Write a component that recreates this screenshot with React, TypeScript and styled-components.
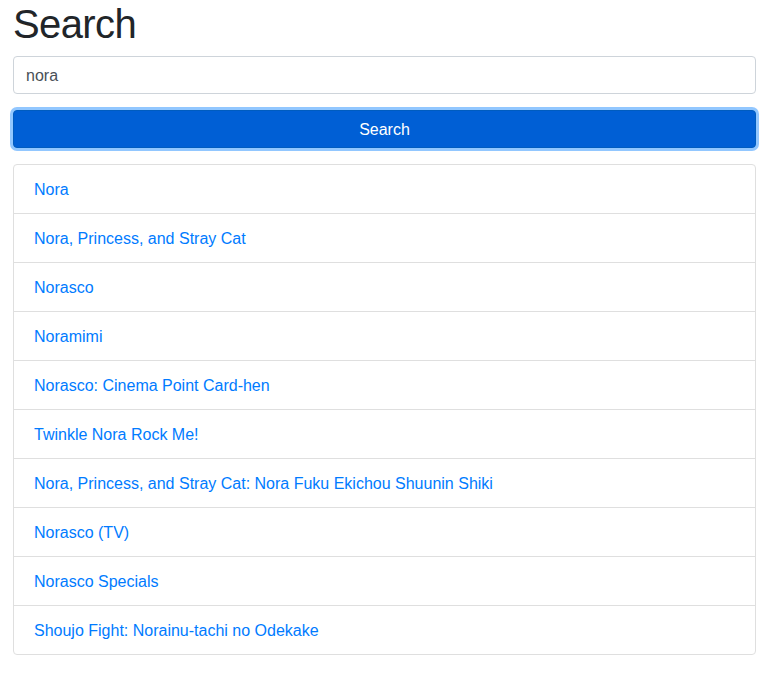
import React, { useState } from "react";
import styled, { createGlobalStyle } from "styled-components";

const Global = createGlobalStyle`
  html, body { margin: 0; padding: 0; background: #fff; }
  body {
    font-family: "Liberation Sans", Arial, sans-serif;
    font-size: 16px;
    line-height: 1.5;
    color: #212529;
  }
  * { box-sizing: border-box; }
`;

const Page = styled.main`
  padding: 0 10px 0 13px;
`;

const Title = styled.h1`
  margin: 0 0 8px;
  font-size: 40px;
  font-weight: 500;
  line-height: 1.2;
  letter-spacing: -0.6px;
  color: #212529;
`;

const Form = styled.form`
  display: flex;
  flex-direction: column;
  gap: 16px;
  margin-bottom: 16px;
`;

const Input = styled.input`
  display: block;
  width: 100%;
  height: 38px;
  padding: 7px 12px 5px;
  font: inherit;
  font-size: 16px;
  color: #495057;
  background: #fff;
  border: 1px solid #ced4da;
  border-radius: 4px;
  outline: none;
`;

const Button = styled.button`
  display: block;
  width: 100%;
  height: 38px;
  padding: 7px 12px 5px;
  font: inherit;
  font-size: 16px;
  color: #fff;
  background: #005fd5;
  border: 1px solid #005cbf;
  border-radius: 4px;
  box-shadow: 0 0 0 3px rgba(38, 143, 255, 0.5);
  cursor: pointer;
`;

const List = styled.ul`
  list-style: none;
  margin: 0;
  padding: 0;
  border: 1px solid #dfdfdf;
  border-radius: 4px;
`;

const Item = styled.li`
  padding: 13px 20px 11px;
  border-top: 1px solid #dfdfdf;
  &:first-child { border-top: none; }
`;

const Link = styled.a`
  color: #007bff;
  text-decoration: none;
`;

const results = [
  "Nora",
  "Nora, Princess, and Stray Cat",
  "Norasco",
  "Noramimi",
  "Norasco: Cinema Point Card-hen",
  "Twinkle Nora Rock Me!",
  "Nora, Princess, and Stray Cat: Nora Fuku Ekichou Shuunin Shiki",
  "Norasco (TV)",
  "Norasco Specials",
  "Shoujo Fight: Norainu-tachi no Odekake",
];

export default function App() {
  const [q, setQ] = useState("nora");
  return (
    <>
      <Global />
      <Page>
        <Title>Search</Title>
        <Form onSubmit={(e) => e.preventDefault()}>
          <Input value={q} onChange={(e) => setQ(e.target.value)} />
          <Button type="submit">Search</Button>
        </Form>
        <List>
          {results.map((r) => (
            <Item key={r}>
              <Link href="#">{r}</Link>
            </Item>
          ))}
        </List>
      </Page>
    </>
  );
}
